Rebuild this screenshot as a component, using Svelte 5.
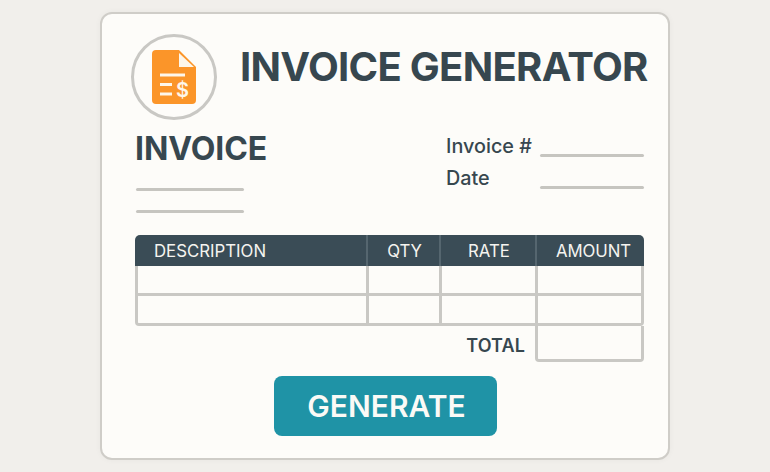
<script>
	const columns = [
		{ label: 'DESCRIPTION', cls: 'left' },
		{ label: 'QTY', cls: 'qty' },
		{ label: 'RATE', cls: 'rate' },
		{ label: 'AMOUNT', cls: 'amount' }
	];
	const rows = [0, 1];
</script>

<div class="page">
	<main class="card">
		<header class="top">
			<div class="badge">
				<svg width="44" height="54" viewBox="0 0 44 54" aria-hidden="true">
					<path d="M4 0H27L44 17V50a4 4 0 0 1-4 4H4a4 4 0 0 1-4-4V4a4 4 0 0 1 4-4Z" fill="#fb9529" />
					<path d="M27 3L42 17H27Z" fill="#fdf6ea" />
					<path d="M8 25H33M8 34.500H20M8 44H20" stroke="#fdf6ea" stroke-width="3" fill="none" />
					<text x="30.500" y="47" class="dollar">$</text>
				</svg>
			</div>
			<h1>INVOICE GENERATOR</h1>
		</header>

		<section class="meta">
			<div class="from">
				<h2>INVOICE</h2>
				<div class="line wide"></div>
				<div class="line wide"></div>
			</div>
			<div class="fields">
				<span>Invoice #</span>
				<div class="line"></div>
				<span>Date</span>
				<div class="line"></div>
			</div>
		</section>

		<section class="table">
			<div class="head">
				{#each columns as col}
					<div class={'th ' + col.cls}>{col.label}</div>
				{/each}
			</div>
			<div class="body">
				{#each rows as row}
					<div class="row">
						{#each columns as col}
							<div class="td"></div>
						{/each}
					</div>
				{/each}
			</div>
			<div class="total">
				<span>TOTAL</span>
				<div class="total-box"></div>
			</div>
		</section>

		<div class="actions">
			<button type="button">GENERATE</button>
		</div>
	</main>
</div>

<style>
	:global(body) {
		margin: 0;
		background: #f1efeb;
	}

	.page {
		width: 770px;
		height: 472px;
		box-sizing: border-box;
		padding: 12px 100px;
		font-family: Inter, "Liberation Sans", sans-serif;
		color: #37474f;
	}

	.card {
		box-sizing: border-box;
		height: 448px;
		background: #fdfcf9;
		border: 2px solid #cfcdc8;
		border-radius: 12px;
		padding: 20px 24px 0 33px;
		box-shadow: 0 0 6px rgba(0, 0, 0, 0.04);
	}

	.top {
		display: flex;
		align-items: flex-start;
		margin-left: -4px;
	}

	.badge {
		box-sizing: border-box;
		width: 86px;
		height: 86px;
		border: 3px solid #c9c8c4;
		border-radius: 50%;
		display: flex;
		align-items: center;
		justify-content: center;
		flex-shrink: 0;
	}

	.dollar {
		font-size: 20px;
		font-weight: 600;
		fill: #fdf6ea;
		text-anchor: middle;
	}

	h1 {
		margin: 9px 0 0 23px;
		font-size: 40px;
		line-height: 48px;
		font-weight: 700;
		letter-spacing: -0.7px;
		white-space: nowrap;
	}

	.meta {
		display: flex;
		justify-content: space-between;
		margin-top: 8px;
		height: 107px;
	}

	h2 {
		margin: 1px 0 19px;
		font-size: 32px;
		line-height: 40px;
		font-weight: 700;
		letter-spacing: -0.1px;
	}

	.line {
		height: 3px;
		border-radius: 2px;
		background: #c6c5c0;
		width: 104px;
	}

	.line.wide {
		width: 108px;
		margin: 0 0 19px 1px;
	}

	.fields {
		display: grid;
		grid-template-columns: 95px 104px;
		grid-auto-rows: 32px;
		margin-top: 2px;
		font-size: 19.800px;
		font-weight: 500;
		align-items: center;
	}

	.fields span {
		padding-left: 1px;
	}

	.fields .line {
		margin-top: 19px;
	}

	.table {
		width: 509px;
	}

	.head,
	.row {
		display: grid;
		grid-template-columns: 231px 73px 96px 1fr;
	}

	.head {
		height: 31px;
		background: #3a4c56;
		border-radius: 5px 5px 0 0;
		color: #f5f4f0;
		font-size: 16.800px;
		font-weight: 400;
	}

	.th {
		display: flex;
		align-items: center;
		justify-content: center;
		border-left: 2px solid #55666f;
		padding-top: 1px;
	}

	.th:first-child {
		border-left: 0;
	}

	.th.left {
		justify-content: flex-start;
		padding-left: 19px;
	}

	.th.qty {
		padding-left: 2px;
		letter-spacing: -0.2px;
	}

	.th.rate {
		padding-left: 2px;
	}

	.th.amount {
		padding-left: 6px;
		letter-spacing: -0.1px;
	}

	.body {
		border: solid #c9c8c4;
		border-width: 0 3px 3px;
		border-radius: 0 0 4px 4px;
	}

	.row {
		height: 27px;
		grid-template-columns: 228px 73px 96px 1fr;
	}

	.row + .row {
		border-top: 3px solid #c9c8c4;
	}

	.td + .td {
		border-left: 3px solid #c9c8c4;
	}

	.total {
		display: flex;
		justify-content: flex-end;
		align-items: center;
	}

	.total span {
		padding-top: 3px;
		font-size: 18px;
		font-weight: 600;
		letter-spacing: 0.1px;
		margin-right: 10px;
	}

	.total-box {
		box-sizing: border-box;
		width: 109px;
		height: 36px;
		border: solid #c9c8c4;
		border-width: 0 3px 3px;
		border-radius: 0 0 4px 4px;
	}

	.actions {
		display: flex;
		justify-content: center;
		margin-top: 14px;
		margin-left: -8px;
	}

	button {
		width: 223px;
		height: 60px;
		padding: 0 0 0 2px;
		border: 0;
		border-radius: 8px;
		background: #1f93a6;
		color: #fbfaf6;
		font-family: inherit;
		font-size: 30px;
		font-weight: 600;
	}
</style>
